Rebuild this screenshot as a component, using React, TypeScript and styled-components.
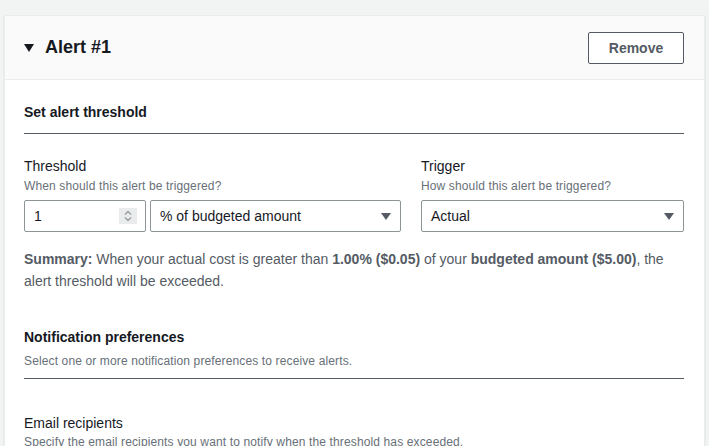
import React from "react";
import styled, { createGlobalStyle } from "styled-components";

const Global = createGlobalStyle`
  html, body { margin: 0; padding: 0; background: #f2f3f3; }
  body { font-family: "Liberation Sans", Arial, sans-serif; color: #16191f; }
  * { box-sizing: border-box; }
`;

const Page = styled.div`
  padding: 15px 4px 0;
  height: 446px;
  overflow: hidden;
`;

const Card = styled.div`
  background: #ffffff;
  border: 1px solid #eaeded;
  box-shadow: 0 1px 1px 0 rgba(0, 28, 36, 0.2);
`;

const Header = styled.div`
  height: 64px;
  background: #fafafa;
  border-bottom: 1px solid #eaeded;
  padding: 0 20px 0 19px;
  display: flex;
  align-items: center;
  justify-content: space-between;
`;

const Title = styled.div`
  display: flex;
  align-items: center;
  gap: 11px;
  font-size: 18px;
  font-weight: 700;
  color: #16191f;
`;

const RemoveButton = styled.button`
  width: 96px;
  height: 32px;
  border: 1px solid #545b64;
  border-radius: 2px;
  background: #ffffff;
  color: #545b64;
  font-family: inherit;
  font-size: 14px;
  font-weight: 700;
  padding: 0;
`;

const Body = styled.div`
  padding: 0 20px 0 19px;
`;

const SectionHead = styled.div<{ $gap: number; $bottom: number }>`
  padding-top: ${(p) => p.$gap}px;
  padding-bottom: ${(p) => p.$bottom}px;
  border-bottom: 1px solid #545b64;
`;

const SectionTitle = styled.div`
  font-size: 14px;
  line-height: 22px;
  font-weight: 700;
  color: #16191f;
`;

const SectionDesc = styled.div`
  font-size: 12px;
  line-height: 16px;
  letter-spacing: 0.13px;
  color: #687078;
  margin-top: 5px;
`;

const FieldGrid = styled.div`
  display: grid;
  grid-template-columns: minmax(0, 377fr) minmax(0, 263fr);
  column-gap: 20px;
  margin-top: 21px;
`;

const Field = styled.div`
  display: flex;
  flex-direction: column;
`;

const Label = styled.div`
  font-size: 14px;
  line-height: 22px;
  color: #16191f;
`;

const Desc = styled.div<{ $top?: number }>`
  font-size: 12px;
  line-height: 16px;
  letter-spacing: 0.13px;
  color: #687078;
  margin-top: ${(p) => p.$top ?? 1}px;
`;

const Controls = styled.div`
  display: flex;
  gap: 4px;
  margin-top: 6px;
`;

const Box = styled.div<{ $w?: number }>`
  height: 32px;
  border: 1px solid #8d9596;
  border-radius: 2px;
  background: #ffffff;
  display: flex;
  align-items: center;
  padding: 0 9px 0 9px;
  font-size: 14px;
  color: #16191f;
  ${(p) => (p.$w ? `width: ${p.$w}px; flex: none;` : "flex: 1;")}
`;

const BoxText = styled.span`
  flex: 1;
`;

const Spinner = styled.div`
  width: 18px;
  height: 16px;
  background: #e9ebed;
  display: flex;
  align-items: center;
  justify-content: center;
  margin-right: -1px;
`;

const Summary = styled.p`
  margin: 16px 0 0;
  font-size: 14px;
  line-height: 22px;
  color: #545b64;
  b { font-weight: 700; }
`;

const Caret = () => (
  <svg width="10" height="7" viewBox="0 0 10 7">
    <path d="M0 0 H10 L5 7 Z" fill="#545b64" />
  </svg>
);

const Expand = () => (
  <svg width="10" height="8" viewBox="0 0 10 8">
    <path d="M0 0 H10 L5 8 Z" fill="#16191f" />
  </svg>
);

const SpinIcon = () => (
  <svg width="10" height="14" viewBox="0 0 10 14">
    <path d="M2 5.5 L5 2.5 L8 5.5" fill="none" stroke="#8d9596" strokeWidth="1.2" />
    <path d="M2 8.5 L5 11.5 L8 8.5" fill="none" stroke="#8d9596" strokeWidth="1.2" />
  </svg>
);

const EmailBlock = styled.div`
  margin-top: 33px;
`;

export default function App() {
  return (
    <>
      <Global />
      <Page>
        <Card>
          <Header>
            <Title>
              <Expand />
              Alert #1
            </Title>
            <RemoveButton>Remove</RemoveButton>
          </Header>
          <Body>
            <SectionHead $gap={21} $bottom={10}>
              <SectionTitle>Set alert threshold</SectionTitle>
            </SectionHead>
            <FieldGrid>
              <Field>
                <Label>Threshold</Label>
                <Desc>When should this alert be triggered?</Desc>
                <Controls>
                  <Box $w={122}>
                    <BoxText>1</BoxText>
                    <Spinner>
                      <SpinIcon />
                    </Spinner>
                  </Box>
                  <Box>
                    <BoxText>% of budgeted amount</BoxText>
                    <Caret />
                  </Box>
                </Controls>
              </Field>
              <Field>
                <Label>Trigger</Label>
                <Desc>How should this alert be triggered?</Desc>
                <Controls>
                  <Box>
                    <BoxText>Actual</BoxText>
                    <Caret />
                  </Box>
                </Controls>
              </Field>
            </FieldGrid>
            <Summary>
              <b>Summary:</b> When your actual cost is greater than <b>1.00% ($0.05)</b> of your{" "}
              <b>budgeted amount ($5.00)</b>, the alert threshold will be exceeded.
            </Summary>
            <SectionHead $gap={34} $bottom={9}>
              <SectionTitle>Notification preferences</SectionTitle>
              <SectionDesc>Select one or more notification preferences to receive alerts.</SectionDesc>
            </SectionHead>
            <EmailBlock>
              <Label>Email recipients</Label>
              <Desc $top={0}>Specify the email recipients you want to notify when the threshold has exceeded.</Desc>
            </EmailBlock>
          </Body>
        </Card>
      </Page>
    </>
  );
}
